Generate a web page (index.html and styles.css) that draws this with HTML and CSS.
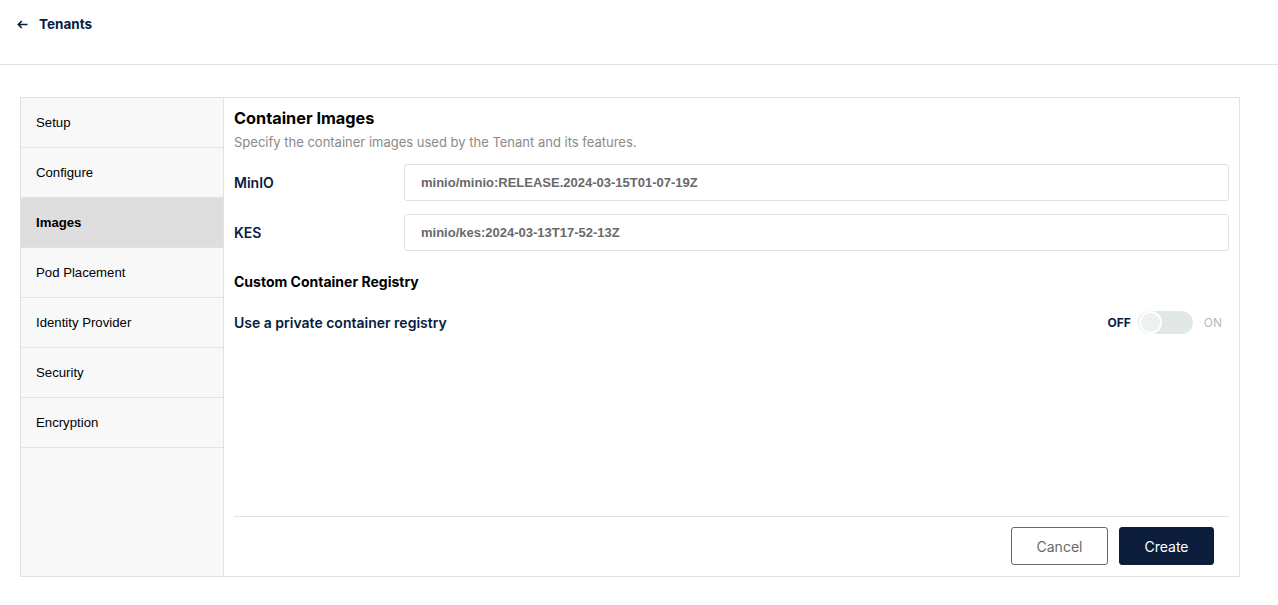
FILE: index.html
```html
<!DOCTYPE html>
<html>
<head>
<meta charset="utf-8">
<link rel="stylesheet" href="styles.css">
</head>
<body>
<header class="topbar">
  <a class="back">
    <svg class="back-icon" width="11" height="9" viewBox="0 0 11 9"><path d="M10.5 4.5H1.5M4.8 1L1.3 4.5L4.8 8" fill="none" stroke="#081c42" stroke-width="1.6"/></svg>
    <span>Tenants</span>
  </a>
</header>
<main class="wizard">
  <nav class="steps">
    <div class="step">Setup</div>
    <div class="step">Configure</div>
    <div class="step active">Images</div>
    <div class="step">Pod Placement</div>
    <div class="step">Identity Provider</div>
    <div class="step">Security</div>
    <div class="step">Encryption</div>
  </nav>
  <section class="panel">
    <div class="panel-body">
      <h2 class="title">Container Images</h2>
      <p class="subtitle">Specify the container images used by the Tenant and its features.</p>
      <div class="field">
        <label class="field-label">MinIO</label>
        <div class="input">minio/minio:RELEASE.2024-03-15T01-07-19Z</div>
      </div>
      <div class="field">
        <label class="field-label">KES</label>
        <div class="input">minio/kes:2024-03-13T17-52-13Z</div>
      </div>
      <h3 class="section">Custom Container Registry</h3>
      <div class="toggle-row">
        <span class="toggle-label">Use a private container registry</span>
        <div class="toggle">
          <span class="off">OFF</span>
          <span class="switch"><span class="knob"></span></span>
          <span class="on">ON</span>
        </div>
      </div>
    </div>
    <div class="actions">
      <button class="btn cancel">Cancel</button>
      <button class="btn create">Create</button>
    </div>
  </section>
</main>
</body>
</html>
```
FILE: styles.css
```css
* { box-sizing: border-box; }
html, body { margin: 0; padding: 0; background: #fff; }
body { font-family: "Liberation Sans", Arial, sans-serif; }

.topbar {
  height: 65px;
  border-bottom: 1px solid #e3e3e3;
  padding: 15px 0 0 17px;
}
.back {
  display: flex;
  align-items: center;
  gap: 11px;
  height: 18px;
  font-family: Inter, sans-serif;
  font-weight: 700;
  font-size: 13.5px;
  color: #081c42;
}
.back-icon { display: block; }

.wizard {
  margin: 32px 0 0 20px;
  width: 1220px;
  height: 480px;
  border: 1px solid #e2e2e2;
  display: flex;
}
.steps {
  width: 203px;
  flex: none;
  background: #f8f8f8;
  border-right: 1px solid #e2e2e2;
}
.step {
  height: 50px;
  border-bottom: 1px solid #e2e2e2;
  padding-left: 15px;
  display: flex;
  align-items: center;
  font-size: 13.2px;
  color: #000;
}
.step.active {
  background: #dedede;
  font-weight: 700;
}

.panel {
  flex: 1;
  display: flex;
  flex-direction: column;
  padding: 0 10px 0 10px;
}
.panel-body { flex: 1; }
.title {
  margin: 0;
  padding-top: 10px;
  font-family: Inter, sans-serif;
  font-weight: 700;
  font-size: 16.3px;
  line-height: 20px;
  color: #000;
}
.subtitle {
  margin: 5px 0 0;
  font-family: Inter, sans-serif;
  font-size: 13px;
  line-height: 18px;
  color: #8a8a8a;
}
.field {
  display: flex;
  align-items: center;
  margin-top: 13px;
}
.field-label {
  width: 170px;
  flex: none;
  font-family: Inter, sans-serif;
  font-weight: 600;
  font-size: 14px;
  color: #081c42;
}
.input {
  flex: 1;
  height: 37px;
  border: 1px solid #e2e2e2;
  border-radius: 3px;
  padding-left: 16px;
  display: flex;
  align-items: center;
  font-weight: 700;
  font-size: 13px;
  color: #696969;
}
.section {
  margin: 21px 0 0;
  font-family: Inter, sans-serif;
  font-weight: 700;
  font-size: 14px;
  line-height: 20px;
  color: #000;
}
.toggle-row {
  margin-top: 17px;
  display: flex;
  align-items: center;
  justify-content: space-between;
  height: 26px;
}
.toggle-label {
  font-family: Inter, sans-serif;
  font-weight: 600;
  font-size: 14px;
  color: #081c42;
}
.toggle {
  display: flex;
  align-items: center;
  padding-right: 7px;
}
.off {
  font-family: Inter, sans-serif;
  font-weight: 700;
  font-size: 12px;
  color: #081c42;
}
.switch {
  margin-left: 7px;
  width: 55px;
  height: 23px;
  border-radius: 12px;
  background: #e2e7e7;
  position: relative;
}
.knob {
  position: absolute;
  left: 1px;
  top: 0;
  width: 23px;
  height: 23px;
  border-radius: 50%;
  background: #eef1f1;
  border: 2px solid #fff;
}
.on {
  margin-left: 11px;
  font-family: Inter, sans-serif;
  font-size: 12px;
  color: #b8b8b8;
}

.actions {
  border-top: 1px solid #e2e2e2;
  display: flex;
  justify-content: flex-end;
  gap: 11px;
  padding: 10px 15px 11px 0;
}
.btn {
  height: 38px;
  border-radius: 3px;
  font-family: Inter, sans-serif;
  font-size: 14px;
  cursor: pointer;
}
.cancel {
  width: 97px;
  background: #fff;
  border: 1px solid #696969;
  color: #696969;
}
.create {
  width: 95px;
  background: #0c1c3b;
  border: 1px solid #0c1c3b;
  color: #fff;
}
```
